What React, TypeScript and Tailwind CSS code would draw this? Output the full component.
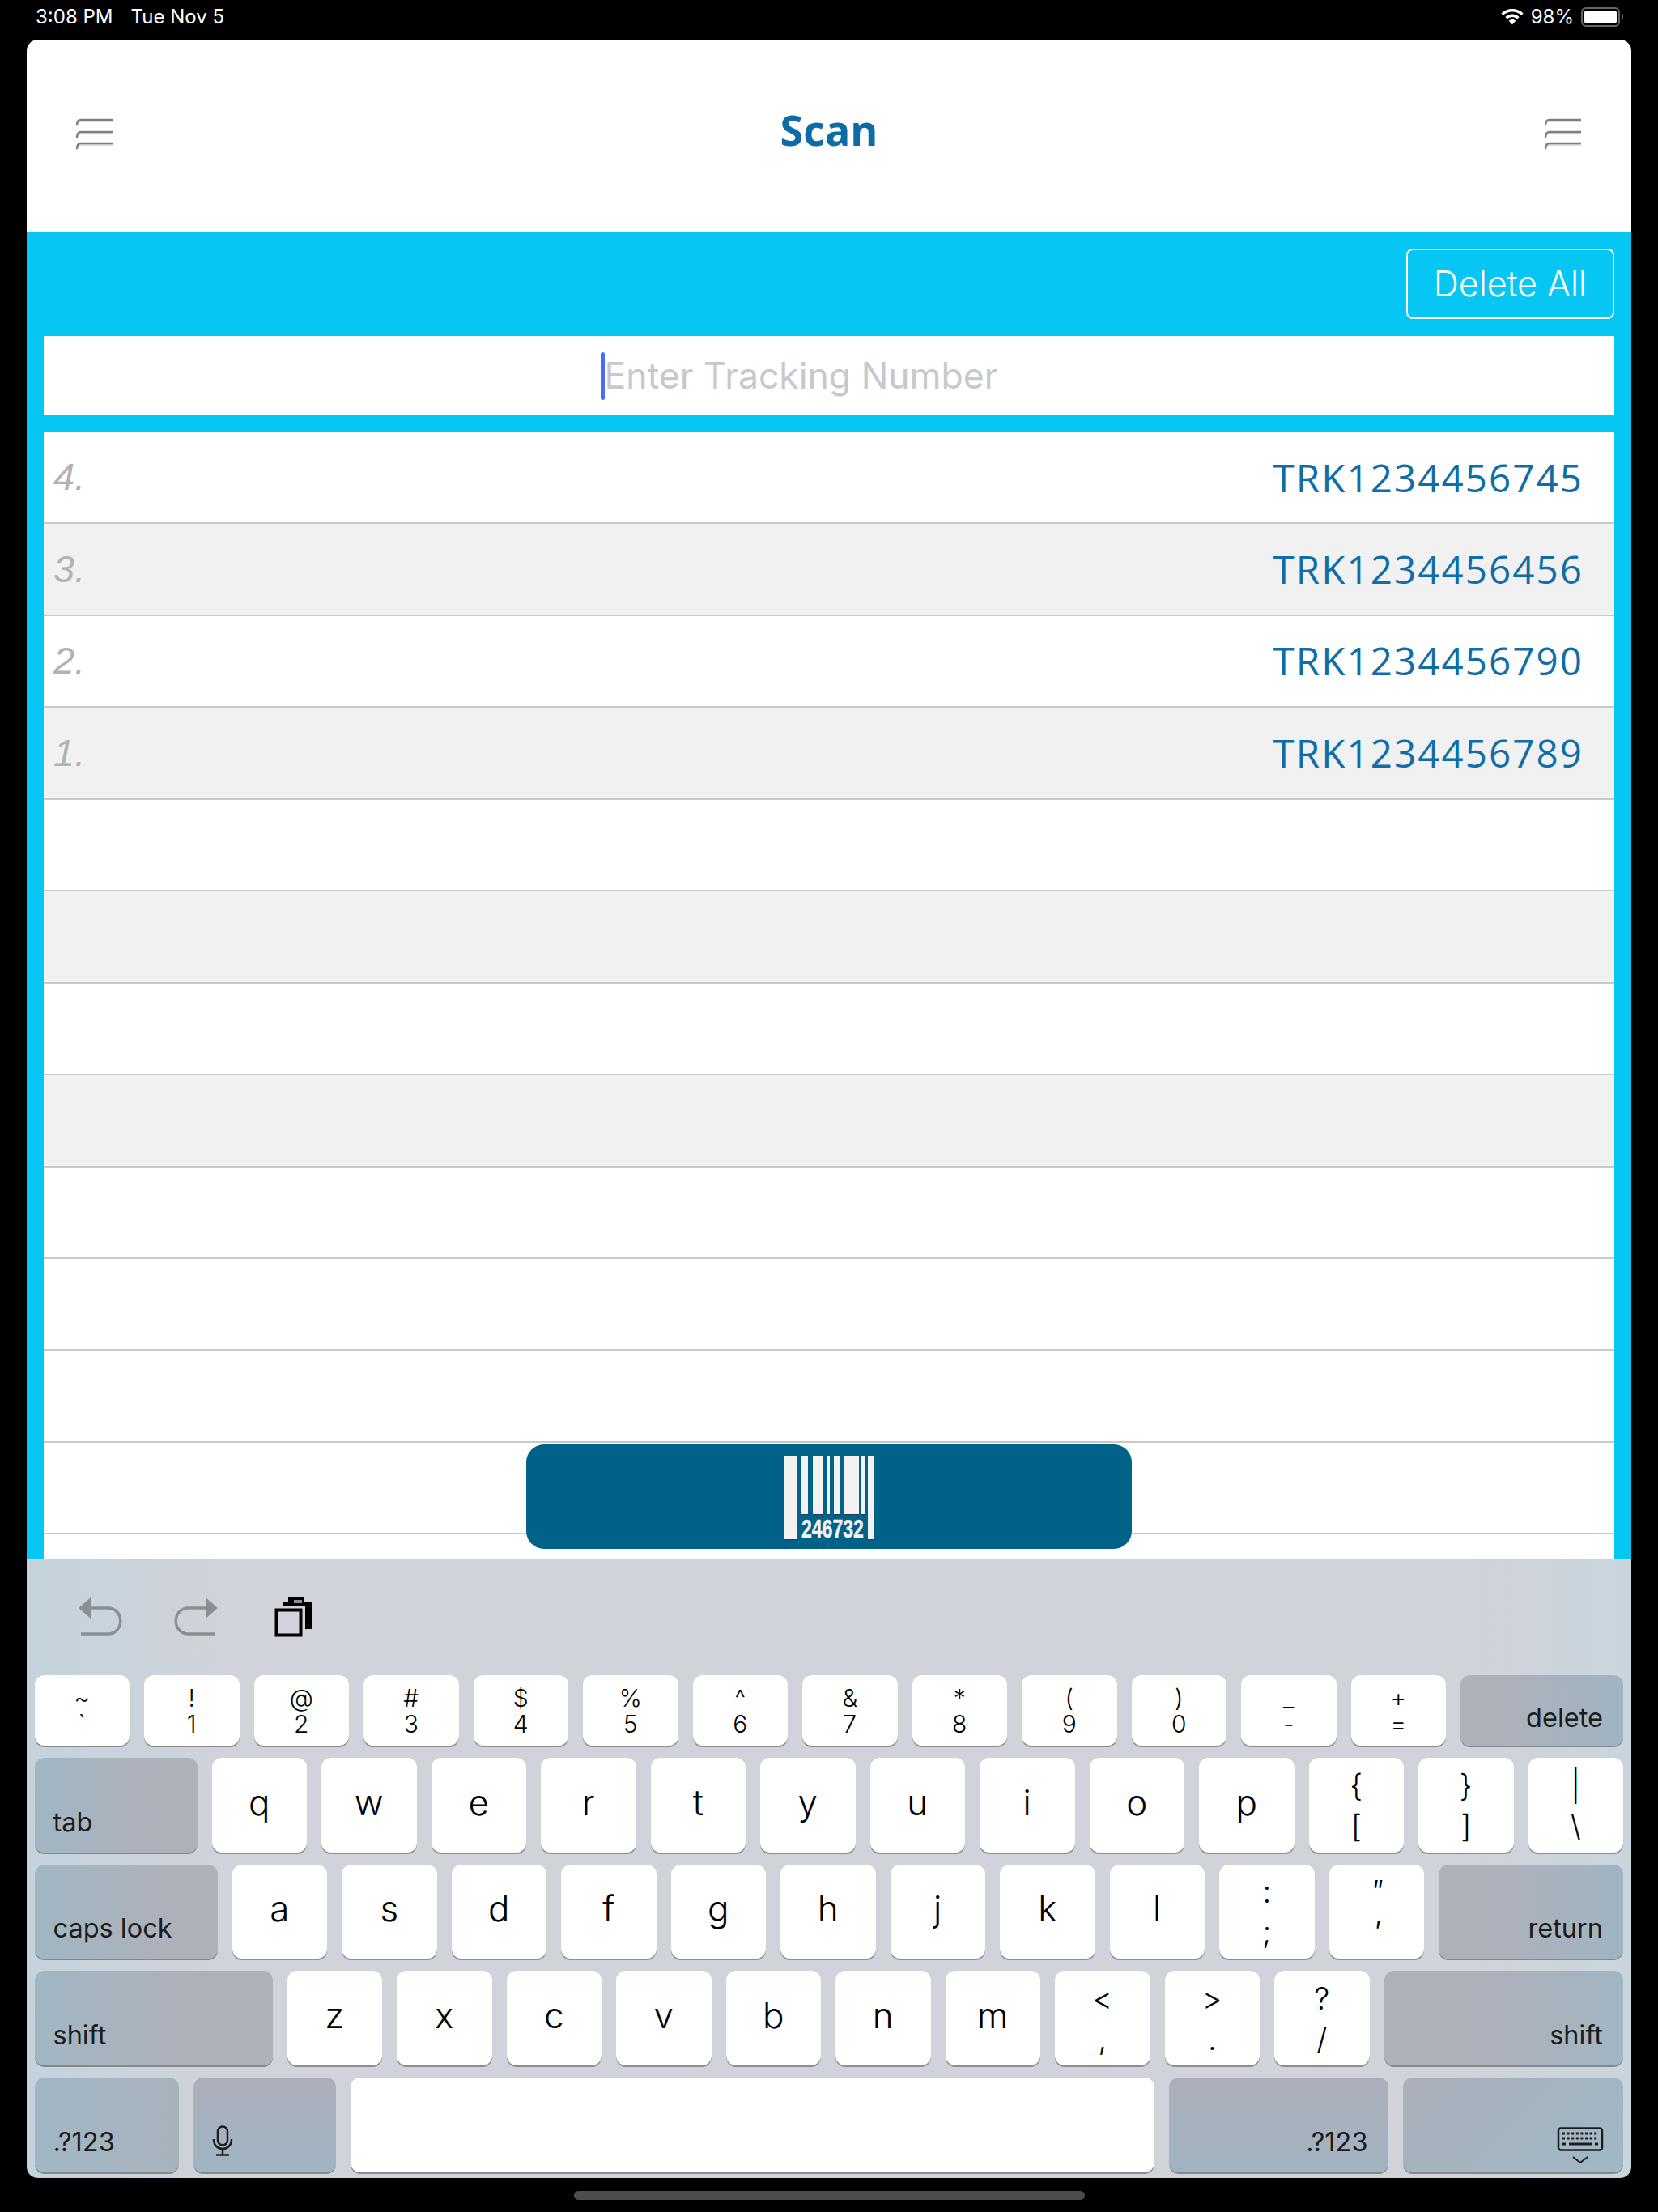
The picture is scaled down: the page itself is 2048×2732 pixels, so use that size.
const sans = "font-['Inter',sans-serif]";

function Hamburger() {
  return (
    <svg width="48" height="40" viewBox="0 0 48 40" fill="none">
      {[2, 17, 31].map((y) => (
        <g key={y}>
          <path d={`M2 ${y + 8} Q2 ${y + 2} 7 ${y + 2} H46`} stroke="#dedede" strokeWidth="2" />
          <path d={`M2 ${y + 7} Q2 ${y} 7 ${y} H46`} stroke="#7f7f7f" strokeWidth="2.4" />
        </g>
      ))}
    </svg>
  );
}

function Wifi() {
  return (
    <svg width="28" height="20" viewBox="0 0 28 20" fill="#fff">
      <path d="M14 0C8.6 0 3.8 2 .4 5.4l2.4 2.5C5.6 5 9.6 3.4 14 3.4s8.4 1.6 11.2 4.5l2.4-2.5C24.2 2 19.4 0 14 0z" />
      <path d="M14 6.6c-3.4 0-6.5 1.3-8.6 3.5l2.4 2.5c1.6-1.6 3.8-2.6 6.2-2.6s4.6 1 6.2 2.6l2.4-2.5c-2.1-2.2-5.2-3.5-8.6-3.5z" />
      <path d="M14 13c-1.7 0-3.2.7-4.2 1.7L14 19.4l4.2-4.7c-1-1-2.5-1.7-4.2-1.7z" />
    </svg>
  );
}

function StatusBar() {
  return (
    <div className={`flex h-[49px] items-center justify-between pb-[8px] pl-[44px] pr-[43px] text-white text-[24px] ${sans}`}>
      <div className="flex gap-[22px]">
        <span>3:08 PM</span>
        <span>Tue Nov 5</span>
      </div>
      <div className="flex items-center gap-[9px]">
        <Wifi />
        <span>98%</span>
        <div className="flex items-center gap-[2px]">
          <div className="h-[24px] w-[48px] rounded-[6px] border-2 border-[#666] p-[2px]">
            <div className="h-full w-full rounded-[3px] bg-white" />
          </div>
          <div className="h-[8px] w-[2px] rounded-r-full bg-[#666]" />
        </div>
      </div>
    </div>
  );
}

function Header() {
  return (
    <div className="flex h-[237px] items-center justify-between rounded-t-[14px] bg-white pb-[3px] pl-[60px] pr-[60px]">
      <Hamburger />
      <h1 className="pb-[12px] font-['Open_Sans',sans-serif] text-[52px] font-bold text-[#0d6ca6]">Scan</h1>
      <Hamburger />
    </div>
  );
}

const rows = [
  { n: '4.', code: 'TRK1234456745' },
  { n: '3.', code: 'TRK1234456456' },
  { n: '2.', code: 'TRK1234456790' },
  { n: '1.', code: 'TRK1234456789' },
  {}, {}, {}, {}, {}, {}, {}, {}, {},
];

function Barcode() {
  const bars = [
    [0, 15, 103],
    [21, 8, 72],
    [35, 13, 72],
    [53, 3, 72],
    [61, 8, 72],
    [73, 19, 72],
    [95, 5, 72],
    [103, 8, 103],
  ];
  return (
    <svg width="111" height="112" viewBox="0 0 111 112">
      {bars.map(([x, w, h]) => (
        <g key={x}>
          <rect x={x} y={1} width={w} height={h} fill="#2a3a42" />
          <rect x={x} y={0} width={w} height={h} fill="#f2f2f2" />
        </g>
      ))}
      <text
        transform="translate(21 101) scale(0.72 1)"
        fontFamily="Liberation Sans, sans-serif"
        fontWeight="700"
        fontSize="32"
        fill="#f2f2f2"
        stroke="#f2f2f2"
        strokeWidth="0.5"
      >
        246732
      </text>
    </svg>
  );
}

function ScanList() {
  return (
    <div className="relative h-[1639px] overflow-hidden bg-[#06c7f4] px-[21px]">
      <div className="flex h-[129px] items-start justify-end pt-[21px]">
        <button className={`h-[87px] w-[257px] rounded-[8px] border-2 border-white text-[43px] font-light text-white ${sans}`}>
          Delete All
        </button>
      </div>
      <div className={`flex h-[98px] items-center justify-center bg-white pr-[74px] ${sans}`}>
        <div className="h-[59px] w-[5px] rounded-full bg-[#4a6cf7]" />
        <span className="text-[44.5px] font-normal text-[#c8c8cc]">Enter Tracking Number</span>
      </div>
      <div className="mt-[21px]">
        {rows.map((r, i) => (
          <div
            key={i}
            className={`flex h-[113.45px] items-center justify-between border-b-2 border-[#c9c9c9] pl-[12px] pr-[38px] ${
              i % 2 === 1 && i < 8 ? 'bg-[#f1f1f1]' : 'bg-white'
            }`}
          >
            <span className="font-['Liberation_Sans',sans-serif] text-[47px] italic text-[#b2b2b2]">{r.n}</span>
            <span className="pb-[1px] font-['Open_Sans',sans-serif] text-[47.5px] tracking-[2.1px] text-[#0f6ea8]">{r.code}</span>
          </div>
        ))}
      </div>
      <div className="absolute left-[617px] top-[1498px] flex h-[129px] w-[748px] justify-center rounded-[22px] bg-[#006288] pt-[14px]">
        <Barcode />
      </div>
    </div>
  );
}

function Key({
  top,
  bottom,
  label,
  tall,
}: {
  top?: string;
  bottom?: string;
  label?: string;
  tall?: boolean;
}) {
  const sym = tall ? 'text-[38px] font-light leading-[50px]' : 'text-[30px] font-light leading-[32px]';
  const slant = top === '"' ? 'italic' : '';
  return (
    <div className={`flex w-[117.5px] flex-col items-center justify-center rounded-[12px] bg-white text-black shadow-[0_2px_0_#8b8d92] ${sans}`}>
      {label ? (
        <span className="pb-[8px] text-[44px] font-light leading-none">{label}</span>
      ) : (
        <>
          <span className={`${sym} ${slant}`}>{top}</span>
          <span className={`${sym} ${slant}`}>{bottom}</span>
        </>
      )}
    </div>
  );
}

function Special({
  className,
  children,
  right,
}: {
  className: string;
  children?: React.ReactNode;
  right?: boolean;
}) {
  return (
    <div
      className={`flex items-end rounded-[12px] pb-[21px] text-[32.5px] leading-none text-[#1c1c1e] shadow-[0_2px_0_#85888d] ${sans} ${
        right ? 'justify-end pr-[25px]' : 'pl-[23px]'
      } ${className}`}
    >
      {children}
    </div>
  );
}

function Keyboard() {
  const row1 = ['~|`', '!|1', '@|2', '#|3', '$|4', '%|5', '^|6', '&|7', '*|8', '(|9', ')|0', '_|-', '+|='];
  const row2 = ['q', 'w', 'e', 'r', 't', 'y', 'u', 'i', 'o', 'p', '{|[', '}|]', '||\\'];
  const row3 = ['a', 's', 'd', 'f', 'g', 'h', 'j', 'k', 'l', ':|;', '"|\''];
  const row4 = ['z', 'x', 'c', 'v', 'b', 'n', 'm', '<|,', '>|.', '?|/'];

  const renderKey = (k: string, tall = true) => {
    if (k.length === 1) return <Key key={k} label={k} />;
    return <Key key={k} top={k.slice(0, 1)} bottom={k.slice(2)} tall={tall} />;
  };

  return (
    <div className="h-[765px] rounded-b-[14px] bg-[linear-gradient(90deg,#c4d3dd_0%,#d0d3d9_12%,#d0d3d9_90%,#c9d5dd_100%)] pl-[9.5px] pr-[10px]">
      <div className="flex h-[144px] items-center pl-[53px]">
        <svg width="56" height="50" viewBox="0 0 56 50" fill="none">
          <path d="M1 14 L16 1 V27 Z" fill="#8b8e93" />
          <path d="M14 14 H37 C58 14 58 46 37 46 H4" stroke="#8b8e93" strokeWidth="3.5" />
        </svg>
        <svg className="ml-[62px]" width="56" height="50" viewBox="0 0 56 50" fill="none">
          <path d="M55 14 L40 1 V27 Z" fill="#8b8e93" />
          <path d="M42 14 H19 C-2 14 -2 46 19 46 H52" stroke="#8b8e93" strokeWidth="3.5" />
        </svg>
        <svg className="ml-[69px]" width="48" height="50" viewBox="0 0 48 50">
          <path d="M11 6 H17 V1 H36 V6 H43 Q47 6 47 10 V38 Q47 40 44 40 H38 V11 H10 Z" fill="#000" />
          <rect x="24" y="4" width="10" height="4" fill="#8b8e93" />
          <rect x="2.5" y="16.5" width="30" height="31" fill="none" stroke="#000" strokeWidth="4" />
        </svg>
      </div>
      <div className="flex flex-col gap-[15px]">
        <div className="flex h-[87px] gap-[18px]">
          {row1.map((k) => renderKey(k, false))}
          <Special right className="flex-1 bg-[linear-gradient(90deg,#aeb1ba_25%,#a0b4c2)] !pb-[18px]">
            delete
          </Special>
        </div>
        <div className="flex h-[117px] gap-[18px]">
          <Special className="w-[201px] bg-[linear-gradient(90deg,#a1b6c4,#adb1ba_70%)]">tab</Special>
          {row2.map((k) => renderKey(k))}
        </div>
        <div className="flex h-[116px] gap-[18px]">
          <Special className="w-[226px] bg-[linear-gradient(90deg,#a1b6c4,#adb1ba_70%)]">caps lock</Special>
          {row3.map((k) => renderKey(k))}
          <Special right className="flex-1 bg-[linear-gradient(90deg,#aeb1ba_25%,#a0b4c2)]">
            return
          </Special>
        </div>
        <div className="flex h-[117px] gap-[18px]">
          <Special className="w-[294px] bg-[linear-gradient(90deg,#a1b6c4,#adb1ba_60%)]">shift</Special>
          {row4.map((k) => renderKey(k))}
          <Special right className="flex-1 bg-[linear-gradient(90deg,#aeb1ba_40%,#a2b5c3)]">
            shift
          </Special>
        </div>
        <div className="flex h-[117px] gap-[18px]">
          <Special className="w-[178px] bg-[linear-gradient(90deg,#a0b7c6,#a9b2bc)]">.?123</Special>
          <Special className="w-[176px] bg-[linear-gradient(180deg,#acafba,#a0b4c3)] !pb-[20px]">
            <svg width="26" height="38" viewBox="0 0 26 38" fill="none" stroke="#1c1c1e" strokeWidth="2.5">
              <rect x="7" y="1.5" width="12" height="23" rx="6" />
              <path d="M2 17 C2 33 24 33 24 17 M13 29 V36" />
              <path d="M5 36.5 H21" />
            </svg>
          </Special>
          <div className="w-[993px] rounded-[12px] bg-white shadow-[0_2px_0_#8b8d92]" />
          <Special right className="w-[271px] bg-[linear-gradient(180deg,#acafba,#a2b3c1)]">
            .?123
          </Special>
          <Special right className="flex-1 bg-[linear-gradient(135deg,#abafba,#9fb8c6)] !pb-[4px] !pr-[24px]">
            <svg width="58" height="52" viewBox="0 0 58 52" fill="none">
              <rect x="2" y="1.5" width="54" height="27" rx="3" stroke="#1c1c1e" strokeWidth="2.5" />
              <path d="M7 8 H51 M7 14 H51" stroke="#1c1c1e" strokeWidth="3" strokeDasharray="3 2.6" />
              <path d="M7 21 H11 M15 21 H43 M47 21 H51" stroke="#1c1c1e" strokeWidth="3" />
              <path d="M20 37 L29 44 L38 37" stroke="#1c1c1e" strokeWidth="2" />
            </svg>
          </Special>
        </div>
      </div>
    </div>
  );
}

export default function App() {
  return (
    <div className="relative flex h-[2732px] w-[2048px] flex-col overflow-hidden bg-black">
      <StatusBar />
      <div className="mx-[33px] flex flex-col">
        <Header />
        <ScanList />
        <Keyboard />
      </div>
      <div className="mt-[16px] flex justify-center">
        <div className="h-[11px] w-[631px] rounded-full bg-[#4c4c4c]" />
      </div>
    </div>
  );
}
